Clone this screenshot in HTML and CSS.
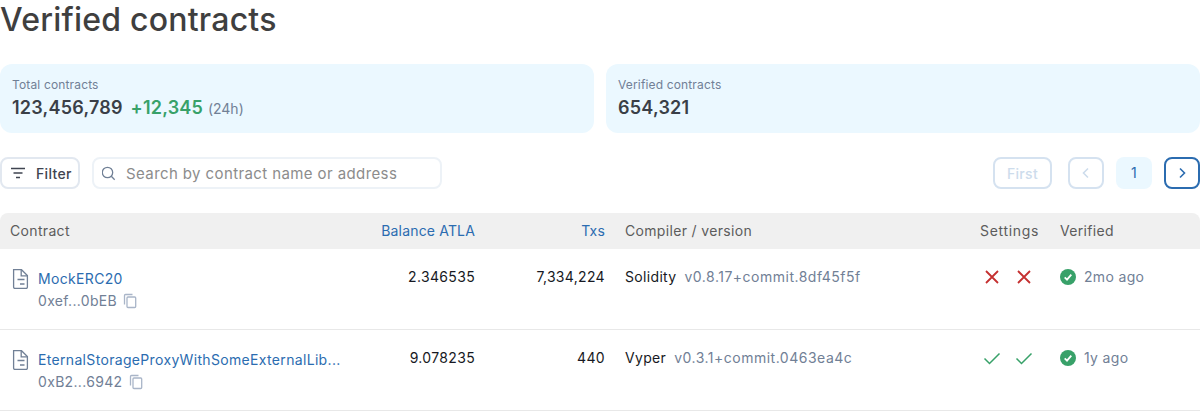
FILE: index.html
```html
<!DOCTYPE html>
<html>
<head>
    <title>Verified contracts</title>
    <link rel="stylesheet" href="styles.css">
</head>
<body>
    <h1 class="page-title">Verified contracts</h1>

    <div class="stats">
        <div class="stat-card">
            <div class="stat-label">Total contracts</div>
            <div class="stat-value">123,456,789 <span class="stat-diff">+12,345</span> <span class="stat-period">(24h)</span></div>
        </div>
        <div class="stat-card">
            <div class="stat-label">Verified contracts</div>
            <div class="stat-value">654,321</div>
        </div>
    </div>

    <div class="toolbar">
        <button class="filter-button">
            <svg width="20" height="20" viewBox="0 0 20 20" fill="none" stroke="#3f4450" stroke-width="1.5"><path d="M1 5.500h14M3.500 10h9M6 14.500h4"/></svg>
            Filter
        </button>
        <div class="search">
            <svg width="18" height="18" viewBox="0 0 18 18" fill="none" stroke="#718096" stroke-width="1.3"><circle cx="5.500" cy="8.500" r="5.200"/><path d="M9.300 12.300l3.400 3.400"/></svg>
            <span class="search-text">Search by contract name or address</span>
        </div>
        <div class="pagination">
            <button class="page-button first" disabled>First</button>
            <button class="page-button arrow" disabled>
                <svg width="16" height="16" viewBox="0 0 16 16" fill="none" stroke="currentColor" stroke-width="1.600"><path d="M10 3.500L5.500 8l4.500 4.500"/></svg>
            </button>
            <span class="page-current">1</span>
            <button class="page-button arrow active">
                <svg width="16" height="16" viewBox="0 0 16 16" fill="none" stroke="currentColor" stroke-width="1.600"><path d="M6 3.500L10.500 8 6 12.500"/></svg>
            </button>
        </div>
    </div>

    <table class="contracts">
        <thead>
            <tr>
                <th class="col-contract">Contract</th>
                <th class="col-balance link-head">Balance ATLA</th>
                <th class="col-txs link-head">Txs</th>
                <th class="col-compiler">Compiler / version</th>
                <th class="col-settings">Settings</th>
                <th class="col-verified">Verified</th>
            </tr>
        </thead>
        <tbody>
            <tr>
                <td>
                    <div class="contract-cell">
                        <svg class="file-icon" width="20" height="20" viewBox="0 0 20 20" fill="none" stroke="#718096" stroke-width="1.300"><path d="M3.600 .7h7.900l5.900 5.900v11.500a1.200 1.200 0 0 1-1.200 1.200H4.800a1.200 1.200 0 0 1-1.200-1.200z"/><path d="M11.200 1v5.900h6M7.500 10.500h7M10 15h4.500"/></svg>
                        <div>
                            <a class="contract-name">MockERC20</a>
                            <div class="contract-address">0xef...0bEB
                                <svg width="16" height="16" viewBox="0 0 16 16" fill="none" stroke="#a9b5c8" stroke-width="1.300"><path d="M2.500 11.500V2.500a1 1 0 0 1 1-1h7"/><rect x="5" y="4" width="8.700" height="10.500" rx="1"/></svg>
                            </div>
                        </div>
                    </div>
                </td>
                <td class="num">2.346535</td>
                <td class="num">7,334,224</td>
                <td>Solidity<span class="version">v0.8.17+commit.8df45f5f</span></td>
                <td>
                    <div class="settings">
                        <svg width="24" height="24" viewBox="0 0 24 24" fill="none" stroke="#c53030" stroke-width="1.800"><path d="M6 6l12 12M18 6L6 18"/></svg>
                        <svg width="24" height="24" viewBox="0 0 24 24" fill="none" stroke="#c53030" stroke-width="1.800"><path d="M6 6l12 12M18 6L6 18"/></svg>
                    </div>
                </td>
                <td>
                    <div class="verified">
                        <svg width="16" height="16" viewBox="0 0 16 16"><circle cx="8" cy="8" r="8" fill="#38a169"/><path d="M4.700 8.300l2.300 2.300 4.300-5" fill="none" stroke="#fff" stroke-width="1.800"/></svg>
                        <span>2mo ago</span>
                    </div>
                </td>
            </tr>
            <tr>
                <td>
                    <div class="contract-cell">
                        <svg class="file-icon" width="20" height="20" viewBox="0 0 20 20" fill="none" stroke="#718096" stroke-width="1.300"><path d="M3.600 .7h7.900l5.900 5.900v11.500a1.200 1.200 0 0 1-1.200 1.200H4.800a1.200 1.200 0 0 1-1.200-1.200z"/><path d="M11.200 1v5.900h6M7.500 10.500h7M10 15h4.500"/></svg>
                        <div>
                            <a class="contract-name">EternalStorageProxyWithSomeExternalLib...</a>
                            <div class="contract-address">0xB2...6942
                                <svg width="16" height="16" viewBox="0 0 16 16" fill="none" stroke="#a9b5c8" stroke-width="1.300"><path d="M2.500 11.500V2.500a1 1 0 0 1 1-1h7"/><rect x="5" y="4" width="8.700" height="10.500" rx="1"/></svg>
                            </div>
                        </div>
                    </div>
                </td>
                <td class="num">9.078235</td>
                <td class="num">440</td>
                <td>Vyper<span class="version">v0.3.1+commit.0463ea4c</span></td>
                <td>
                    <div class="settings">
                        <svg width="24" height="24" viewBox="0 0 24 24" fill="none" stroke="#38a169" stroke-width="1.500"><path d="M4.500 12.500l5 5L19.500 7.500"/></svg>
                        <svg width="24" height="24" viewBox="0 0 24 24" fill="none" stroke="#38a169" stroke-width="1.500"><path d="M4.500 12.500l5 5L19.500 7.500"/></svg>
                    </div>
                </td>
                <td>
                    <div class="verified">
                        <svg width="16" height="16" viewBox="0 0 16 16"><circle cx="8" cy="8" r="8" fill="#38a169"/><path d="M4.700 8.300l2.300 2.300 4.300-5" fill="none" stroke="#fff" stroke-width="1.800"/></svg>
                        <span>1y ago</span>
                    </div>
                </td>
            </tr>
        </tbody>
    </table>
</body>
</html>
```

FILE: styles.css
```css
* {
    box-sizing: border-box;
}

body {
    font-family: 'Inter', sans-serif;
    font-size: 14px;
    letter-spacing: 0.33px;
    color: #171923;
    background-color: #fff;
    margin: 0;
    padding: 0;
    overflow: hidden;
}

.page-title {
    font-family: 'Inter', sans-serif;
    font-size: 32px;
    font-weight: 500;
    line-height: 40px;
    letter-spacing: 0.22px;
    color: #3f3f3f;
    margin: 0;
    height: 64px;
}

.stats {
    display: flex;
    gap: 12px;
}

.stat-card {
    flex: 1;
    height: 69px;
    padding: 13px 12px 0;
    border-radius: 12px;
    background-color: #ebf8ff;
}

.stat-label {
    font-size: 12px;
    line-height: 16px;
    letter-spacing: 0.15px;
    color: #718096;
}

.stat-value {
    font-size: 18px;
    font-weight: 600;
    line-height: 24px;
    letter-spacing: 0.22px;
    margin-top: 3px;
    color: #3a3f47;
}

.stat-diff {
    color: #38a169;
    margin-left: 3px;
}

.stat-period {
    font-size: 14px;
    font-weight: 400;
    letter-spacing: 0;
    color: #718096;
}

.toolbar {
    display: flex;
    align-items: center;
    gap: 12px;
    margin-top: 24px;
    height: 32px;
}

.filter-button {
    display: flex;
    align-items: center;
    gap: 6px;
    width: 80px;
    height: 32px;
    padding: 0 0 0 8px;
    font-family: inherit;
    font-size: 14px;
    font-weight: 500;
    letter-spacing: 0.33px;
    color: #3f4450;
    background: #fff;
    border: 2px solid #e2e8f0;
    border-radius: 8px;
}

.search {
    display: flex;
    align-items: center;
    gap: 6px;
    width: 350px;
    height: 32px;
    padding-left: 8px;
    border: 2px solid #edf2f7;
    border-radius: 8px;
}

.search-text {
    font-size: 15px;
    letter-spacing: 0.4px;
    color: #8c8c8c;
}

.pagination {
    display: flex;
    align-items: center;
    margin-left: auto;
}

.page-button {
    display: flex;
    align-items: center;
    justify-content: center;
    height: 32px;
    padding: 0;
    font-family: inherit;
    font-size: 14px;
    font-weight: 500;
    letter-spacing: 0.33px;
    background: #fff;
    border: 2px solid #2b6cb0;
    border-radius: 8px;
    color: #2b6cb0;
}

.page-button:disabled {
    color: #cddcec;
    border-color: #d5e2f0;
}

.first {
    width: 59px;
    margin-right: 16px;
}

.arrow {
    width: 36px;
}

.page-current {
    width: 36px;
    height: 32px;
    margin: 0 12px;
    line-height: 32px;
    text-align: center;
    color: #2b6cb0;
    background-color: #ebf8ff;
    border-radius: 8px;
}

.contracts {
    width: 100%;
    margin-top: 24px;
    border-collapse: separate;
    border-spacing: 0;
    table-layout: fixed;
}

.contracts th {
    height: 36px;
    padding: 0 10px 2px;
    font-weight: 400;
    text-align: left;
    color: #5c5c5c;
    background-color: #f0f0f0;
}

.contracts th:first-child {
    border-top-left-radius: 8px;
}

.contracts th:last-child {
    border-top-right-radius: 8px;
}

.contracts th.link-head {
    text-align: right;
    letter-spacing: 0.17px;
    color: #2b6cb0;
}

.col-balance {
    width: 135px;
}

.col-txs {
    width: 130px;
}

.col-compiler {
    width: 355px;
}

.contracts th.col-settings {
    width: 80px;
    letter-spacing: 0.7px;
}

.col-verified {
    width: 150px;
}

.contracts td {
    height: 81px;
    padding: 18px 10px 0;
    vertical-align: top;
    line-height: 20px;
    border-bottom: 1px solid #e8e8e8;
}

.contracts td.num {
    text-align: right;
}

.contract-cell {
    display: flex;
    gap: 8px;
}

.file-icon {
    flex-shrink: 0;
    margin-top: 2px;
}

.contract-name {
    display: block;
    margin-top: 2px;
    color: #2b6cb0;
    white-space: nowrap;
}

.contract-address {
    display: flex;
    align-items: center;
    gap: 5px;
    margin-top: 2px;
    color: #718096;
}

.version {
    margin-left: 8px;
    letter-spacing: 0.5px;
    color: #718096;
}

.settings {
    display: flex;
    gap: 8px;
    margin-top: -2px;
}

.verified {
    display: flex;
    align-items: center;
    gap: 8px;
    color: #718096;
}
```
